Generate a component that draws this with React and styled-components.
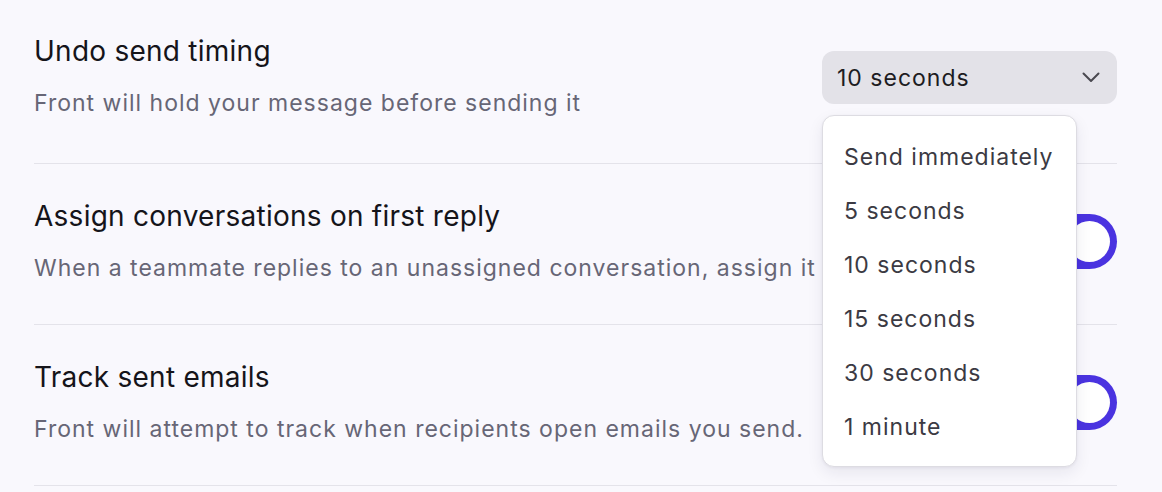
import React from "react";
import styled, { createGlobalStyle } from "styled-components";

const Global = createGlobalStyle`
  html, body { margin: 0; padding: 0; background: #f9f8fd; }
  body { font-family: Inter, "Noto Sans", sans-serif; -webkit-font-smoothing: antialiased; }
`;

const Page = styled.div`
  width: 1162px;
  height: 492px;
  overflow: hidden;
  background: #f9f8fd;
  padding: 0 45px 0 34px;
  box-sizing: border-box;
`;

const Row = styled.div`
  display: flex;
  align-items: center;
  justify-content: space-between;
  padding: ${(p) => (p.$first ? "33px 0 44px" : "34px 0 40px")};
  border-bottom: 1px solid #e4e3ea;
`;

const Text = styled.div`
  display: flex;
  flex-direction: column;
  gap: 18px;
  white-space: nowrap;
`;

const Title = styled.div`
  font-size: 28px;
  line-height: 36px;
  letter-spacing: 0.25px;
  color: #15141a;
  font-weight: 400;
`;

const Desc = styled.div`
  font-size: 23px;
  line-height: 32px;
  letter-spacing: 1px;
  color: #676676;
`;

const SelectWrap = styled.div`
  position: relative;
  align-self: flex-start;
  margin-top: 18px;
`;

const SelectButton = styled.div`
  width: 295px;
  height: 53px;
  box-sizing: border-box;
  border-radius: 12px;
  background: #e3e2e8;
  display: flex;
  align-items: center;
  justify-content: space-between;
  padding: 0 17px 0 15px;
  font-size: 23px;
  letter-spacing: 1px;
  color: #1d1c22;
`;

const Menu = styled.div`
  position: absolute;
  top: 64px;
  left: 0;
  width: 255px;
  box-sizing: border-box;
  background: #ffffff;
  border: 1px solid #dddce2;
  border-radius: 12px;
  box-shadow: 0 6px 16px rgba(30, 25, 60, 0.08), 0 1px 3px rgba(30, 25, 60, 0.06);
  padding: 14px 0 12px;
  z-index: 10;
`;

const MenuItem = styled.div`
  height: 54px;
  display: flex;
  align-items: center;
  padding: 0 21px;
  font-size: 23px;
  letter-spacing: 1px;
  color: #3b3a43;
  white-space: nowrap;
`;

const Toggle = styled.div`
  flex: none;
  width: 90px;
  height: 55px;
  box-sizing: border-box;
  border-radius: 28px;
  background: #4a33e0;
  padding: 7px;
  display: flex;
  justify-content: ${(p) => (p.$on ? "flex-end" : "flex-start")};
`;

const Knob = styled.div`
  width: 41px;
  height: 41px;
  border-radius: 50%;
  background: #ffffff;
`;

const Chevron = () => (
  <svg width="18" height="11" viewBox="0 0 18 11" fill="none">
    <path d="M1.5 1.5 L9 9 L16.5 1.5" stroke="#4a4950" strokeWidth="2" strokeLinecap="round" strokeLinejoin="round" />
  </svg>
);

const options = ["Send immediately", "5 seconds", "10 seconds", "15 seconds", "30 seconds", "1 minute"];

export default function App() {
  return (
    <>
      <Global />
      <Page>
        <Row $first>
          <Text>
            <Title>Undo send timing</Title>
            <Desc>Front will hold your message before sending it</Desc>
          </Text>
          <SelectWrap>
            <SelectButton>
              <span>10 seconds</span>
              <Chevron />
            </SelectButton>
            <Menu>
              {options.map((o) => (
                <MenuItem key={o}>{o}</MenuItem>
              ))}
            </Menu>
          </SelectWrap>
        </Row>
        <Row>
          <Text>
            <Title>Assign conversations on first reply</Title>
            <Desc>When a teammate replies to an unassigned conversation, assign it to them</Desc>
          </Text>
          <Toggle $on>
            <Knob />
          </Toggle>
        </Row>
        <Row>
          <Text>
            <Title>Track sent emails</Title>
            <Desc>Front will attempt to track when recipients open emails you send.</Desc>
          </Text>
          <Toggle $on>
            <Knob />
          </Toggle>
        </Row>
      </Page>
    </>
  );
}
